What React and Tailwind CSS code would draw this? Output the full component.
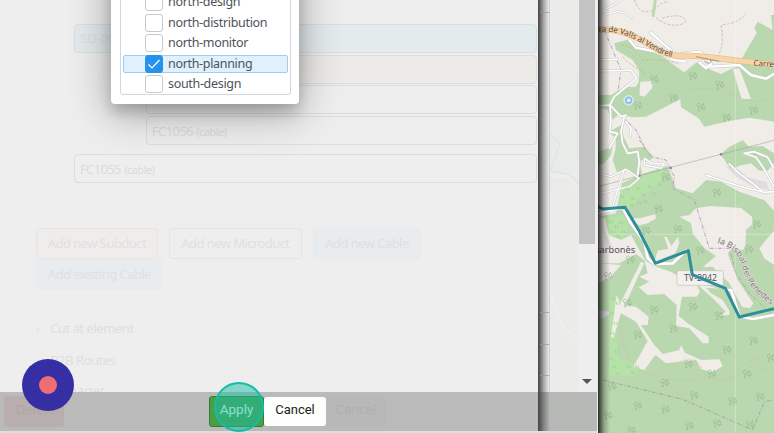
import React from 'react';

const groups = ['north-design', 'north-distribution', 'north-monitor', 'north-planning', 'south-design'];

const trees = [
  [174, 238], [290, 228], [371, 255], [232, 293], [125, 317], [314, 321], [472, 331], [391, 353],
  [208, 532], [187, 627], [362, 578], [245, 687], [150, 692], [482, 673], [312, 751], [458, 748], [102, 779], [36, 828],
  [93, 909], [174, 929], [290, 920], [369, 947], [232, 986], [125, 1005], [472, 1022], [392, 1049], [525, 1074],
  [277, 1092], [347, 1121], [453, 1122], [206, 1148], [294, 1186], [48, 1160], [409, 1203], [492, 1190], [125, 1217],
  [208, 1228], [36, 1246], [363, 1270], [279, 1277], [462, 1273], [106, 1291],
];

const marsh = [
  [75, 585], [90, 562], [108, 590], [122, 560], [140, 580], [158, 555], [172, 576], [190, 548], [82, 620], [104, 610], [126, 604], [146, 600],
  [42, 660], [58, 675], [72, 662], [46, 690], [64, 704], [80, 690],
  [48, 890], [62, 905], [44, 935], [55, 965], [45, 995], [58, 1050], [42, 1070], [52, 1095], [64, 1115], [95, 1095], [108, 1112], [120, 1095],
];

function Road({ d, w = 7 }) {
  return (
    <g fill="none" strokeLinecap="round" strokeLinejoin="round">
      <path d={d} stroke="#cbc8ca" strokeWidth={w + 3} />
      <path d={d} stroke="#fff" strokeWidth={w} />
    </g>
  );
}

function TerrainMap() {
  return (
    <svg className="block h-[433px] w-[176px]" viewBox="6 0 528 1299" fontFamily="'Noto Sans', sans-serif">
      <rect x="6" width="528" height="1299" fill="#f0ece8" />
      <g fill="#bad8af">
        <path d="M55 130 100 118 130 145 175 150 220 185 265 217 302 187 345 210 375 222 425 197 452 150 482 100 475 82 485 65 530 90 525 45H534V365L460 353 400 363 325 380 308 355 255 322 253 298 150 350 110 352 70 343 45 362 35 330 6 322V285L45 285 85 262 120 260 128 245 130 212 110 180 60 150Z" />
        <path d="M374 463 400 440 440 421 458 440 500 438 534 460V490L515 512 490 512 465 490 430 497 405 510 392 490Z" />
        <path d="M38 395 75 375 83 410 100 445 145 440 172 470 160 485 130 480 138 520 125 530 95 512 62 515 50 480 58 450 60 415Z" />
        <path d="M6 455 50 440 45 465 25 490 6 495Z" />
        <path d="M78 550 130 525 215 498 240 565 290 580 330 540 375 545 430 575 505 600 534 632V1299H6V650L60 640Z" />
      </g>
      <path fill="#b6e2a9" d="M75 565 130 535 205 505 190 550 130 590 85 640 70 620ZM28 650 85 645 97 690 75 720 35 700ZM45 880 75 900 60 1010 70 1080 130 1090 120 1130 60 1125 38 1130Z" />
      <g fill="#f0ece8">
        <path d="M133 245 170 243 168 265 145 290 130 286ZM410 207 430 205 465 297 437 297Z" />
        <path d="M250 650 280 645 300 625 345 618 435 624 468 650 470 672 450 690 448 740 440 750 410 745 395 760 425 840 472 910 462 925 438 920 400 850 350 800 320 802 360 768 325 745 290 700 285 670Z" />
        <path d="M534 692 510 720 490 745 505 775 534 795Z" />
        <path d="M95 655 130 655 178 643 180 655 155 670 130 676ZM204 710 213 712 226 738 246 710 250 730 238 760 175 785 185 752 217 746Z" />
        <path d="M6 650 28 655 38 705 75 720 105 705 150 785 120 762 70 790 6 790ZM6 790 75 795 40 835 6 850ZM145 780 180 800 225 815 250 830 370 866 330 863 345 880 380 900 400 932 400 945 370 948 390 935 345 890 300 850 312 875 302 890 258 890 248 947 275 970 338 1010 338 1030 320 1030 280 985 240 978 242 915 205 882 155 885 128 862 160 845 130 830 155 820ZM135 785 145 790 80 930 68 920Z" />
        <path d="M75 915 120 920 158 950 155 975 135 975 175 1035 200 1062 250 1050 255 1035 267 1058 315 1080 370 1078 380 1098 350 1117 315 1108 300 1080 210 1090 178 1065 145 1110 112 1100 155 1023 120 965 75 940 52 1015 45 1010 62 885Z" />
      </g>
      <path fill="#e0dde0" d="M6 930 40 935 38 945 18 955 6 950ZM390 500 430 508 450 530 510 545 520 570 470 560 420 530ZM16 675 35 710 60 760 35 750Z" />
      <g fill="none" stroke="#ccb195" strokeWidth="2.5" strokeDasharray="8 5">
        <path d="M115 0Q130 40 155 35T185 20 215 5M170 45Q210 80 245 75T265 55 195 55M370 160Q385 130 375 75 430 70 450 40M75 135Q110 135 140 180 190 175 245 190M80 170Q105 200 150 220" />
      </g>
      <g fill="none" stroke="#d8b493" strokeWidth="2" strokeDasharray="4 4">
        <path d="M150 315Q250 265 310 265T430 292 534 285M75 950Q70 1050 120 1100T230 1100 320 1110 440 1115 470 1080 534 1110M210 1135Q290 1145 360 1130M265 1205Q230 1150 190 1150M270 1210 320 1299" />
      </g>
      <g fill="none" stroke="#b79fbb" strokeWidth="3" strokeDasharray="12 5 3 5">
        <path d="M25 90 75 210 65 280 40 320M80 350 120 390 150 450M130 420 165 470 210 480 235 530 230 565 295 600 340 745 400 745 420 820 460 880 534 950" />
        <path d="M20 1140 260 1198 470 1290 505 1205 534 1200" stroke="#a7a0ab" />
      </g>
      <path d="M6 560 130 527 220 503 375 463 534 421" fill="none" stroke="#9c9794" strokeWidth="1.5" />
      <g fill="#888"><circle cx="130" cy="527" r="4" /><circle cx="224" cy="504" r="4" /><circle cx="375" cy="463" r="4" /></g>
      <Road d="M6 40 50 15 75 0M25 45 65 35 90 40 110 55" w={4} />
      <Road d="M165 98 200 130 235 158M100 120 120 143 180 155 235 180 270 185M240 172 265 160 310 155 330 170 345 192 330 204 310 188M342 200 430 195 465 225 510 236 534 222" />
      <Road d="M6 180 65 178M6 213 75 212 105 210 122 235 85 265 55 290 42 315 6 318M42 315 45 365 40 395 65 400 40 445M42 315 75 350 90 345M85 350 75 395 80 430 95 460 125 455 130 485 125 525M90 365 105 385 103 410" w={5} />
      <Road d="M6 520 45 530 90 508 130 535 100 560 6 582M85 508 65 570 50 620M145 475 170 490 205 492 195 505 145 495 145 475" w={4} />
      <Road d="M400 492 430 520 470 550 500 575M330 526 345 530 435 560 505 577 534 575M445 460 475 455 515 472 534 505M445 460 480 472 500 500 534 560" w={5} />
      <Road d="M6 640 80 623 105 670 145 725 155 775 175 792 230 790 270 752M390 870 405 870 430 948 470 957 534 945" w={8} />
      <path d="M178 0 171 50" fill="none" stroke="#b9dbaf" strokeWidth="9" />
      <g fill="none">
        <path d="M6 89C70 83 120 110 160 134S220 168 245 167C320 163 370 180 534 193" stroke="#ddb788" strokeWidth="18" />
        <path d="M6 89C70 83 120 110 160 134S220 168 245 167C320 163 370 180 534 193" stroke="#f8d4a6" strokeWidth="15" />
        <path d="M300 170 370 184M325 184Q345 198 345 180" stroke="#7f7771" strokeWidth="2" />
      </g>
      <path d="M418 0V1299M6 703H534" fill="none" stroke="#fff" strokeWidth="2" opacity=".45" />
      {marsh.map(([x, y]) => <path key={`${x}-${y}`} d={`M${x} ${y}v10M${x + 7} ${y + 2}v8`} stroke="#93ca8b" strokeWidth="2" />)}
      {trees.map(([x, y]) => (
        <g key={`${x}-${y}`} transform={`translate(${x} ${y})`} fill="none" stroke="#97b68e" strokeWidth="2">
          <path d="M-6 11V-3M-6 0a5.5 5.500 0 1 1 1 0M-9 11h7M7 11V4M7-11 1 4h12Z" />
        </g>
      ))}
      <circle cx="98" cy="301" r="14" fill="#a9d4ec" stroke="#fff" strokeWidth="2" />
      <circle cx="98" cy="301" r="8" fill="#d9efff" stroke="#6aa9db" strokeWidth="3" />
      <defs>
        <path id="main-road-name" d="M8 96C70 90 120 118 160 142S215 170 260 178" />
        <path id="valley-name" d="M364 729C420 745 428 770 438 800S450 860 534 920" />
      </defs>
      <g fill="#574337" stroke="#fbdcb6" strokeWidth="2" paintOrder="stroke" fontSize="24">
        <text><textPath href="#main-road-name" textLength="236" lengthAdjust="spacingAndGlyphs">ra de Valls al Vendrell</textPath></text>
        <text x="472" y="197" transform="rotate(4 472 197)">Carre</text>
      </g>
      <text x="-3" y="760" fontSize="26" fill="#5a565a" stroke="#eee9e7" strokeWidth="3" paintOrder="stroke" textLength="121" lengthAdjust="spacingAndGlyphs">sarbonès</text>
      <rect x="243" y="812" width="139" height="44" rx="3" fill="#f2f1ef" stroke="#c1c1bf" strokeWidth="2" />
      <text x="264" y="844" fontSize="25" fill="#555" textLength="99" lengthAdjust="spacingAndGlyphs">TV-2942</text>
      <path d="M6 620 20 627 87 622 130 694 178 790 277 752 289 824 388 865 430 951 534 926" fill="none" stroke="#2f8f98" strokeWidth="9" strokeLinejoin="round" />
      <text fill="#867788" stroke="#e8e6de" strokeWidth="3" paintOrder="stroke" fontSize="25">
        <textPath href="#valley-name" textLength="255" lengthAdjust="spacingAndGlyphs">la Bisbal del Penedes</textPath>
      </text>
    </svg>
  );
}

function Divider() {
  return <div className="-mr-0.5 h-px shrink-0 bg-[#ebebeb]" />;
}

function CableForm() {
  return (
    <div className="relative flex h-[392px] flex-col overflow-hidden bg-[#eeeeee] pt-6 pr-px pl-[36px] text-[13px] text-[#dedede]">
      <div className="ml-[38px] h-[29px] shrink-0 rounded border border-[#d9dfe0] bg-[#e4ebed] pl-[5px] leading-[27px] text-[#d9e0e2]">SD-001</div>
      <div className="mt-[2px] ml-[110px] h-[29px] shrink-0 rounded border border-[#dfdedb] bg-[#edebe7]" />
      <div className="mt-[1px] ml-[110px] h-[29px] shrink-0 rounded border border-[#dddddd]" />
      <div className="mt-[2px] ml-[110px] h-[29px] shrink-0 rounded border border-[#dcdcdc] pl-[5px] leading-[28px] text-[#dbdbdb]">
        <span className="tracking-[-0.65px]">FC1056</span> <span className="text-[11px] tracking-[-0.5px]">(cable)</span>
      </div>
      <div className="mt-[9px] ml-[38px] h-[29px] shrink-0 rounded border border-[#dcdcdc] pl-[5px] leading-[28px] text-[#dbdbdb]">
        <span className="tracking-[-0.65px]">FC1055</span> <span className="text-[11px] tracking-[-0.5px]">(cable)</span>
      </div>
      <div className="mt-[45px] flex shrink-0 gap-[11px] whitespace-nowrap leading-[28px] tracking-[-0.55px] text-[#e0e0e0]">
        <div className="h-[31px] w-[122px] rounded-sm border border-[#e9e4e0] bg-[#efedec] text-center">Add new Subduct</div>
        <div className="h-[31px] w-[133px] rounded-sm border border-[#e2e5e4] text-center">Add new Microduct</div>
        <div className="h-[31px] w-[108px] rounded-sm border border-[#e7ebef] bg-[#e8ecef] text-center">Add new Cable</div>
      </div>
      <div className="h-[31px] w-[127px] shrink-0 rounded-sm bg-[#e8ecef] text-center leading-[30px] tracking-[-0.55px] text-[#dfe1e3]">Add existing Cable</div>
      <div className="h-[22px] shrink-0" />
      <Divider />
      <div className="flex h-[31px] shrink-0 items-center tracking-[-0.45px]"><span className="w-[14px]">›</span>Cut at element</div>
      <Divider />
      <div className="flex h-[31px] shrink-0 items-center tracking-[-0.45px]"><span className="w-[14px]">›</span>B2B Routes</div>
      <Divider />
      <div className="flex h-[28px] shrink-0 items-center"><span className="w-[14px]">›</span>Manager</div>
    </div>
  );
}

function GroupPicker() {
  return (
    <div className="absolute top-[-100px] left-[111px] flex h-[204px] w-[188px] flex-col justify-end rounded-sm bg-white px-[9px] pb-[9px] shadow-[0_8px_42px_2px_rgba(0,0,0,0.3),0_8px_14px_rgba(0,0,0,0.18)]">
      <div className="flex h-[150px] w-[171px] flex-col justify-end gap-[2.5px] rounded-[3px] border border-[#d4d7d9] px-[2px] pb-px">
        {groups.map((name) => {
          const selected = name === 'north-planning';
          return (
            <div key={name} className={`flex h-[18px] shrink-0 items-center rounded-[2px] border pl-[21px] ${selected ? 'border-[#9acff6] bg-[#e2f0fc]' : 'border-transparent'}`}>
              <span className={`flex size-[18px] items-center justify-center rounded-[3px] border ${selected ? 'border-[#2593ed] bg-[#2593ed]' : 'border-[#c6c9cc] bg-white'}`}>
                {selected && <svg className="size-3" viewBox="0 0 12 12"><path d="M.5 6.5 4 10l7.500-8" fill="none" stroke="white" strokeWidth="1.2" /></svg>}
              </span>
              <span className="ml-[5px] text-[12.5px] leading-4 tracking-[-0.32px] text-[#4d5359]">{name}</span>
            </div>
          );
        })}
      </div>
    </div>
  );
}

export default function App() {
  return (
    <div className="relative flex h-[433px] w-[774px] overflow-hidden bg-[#eee] font-['Noto_Sans',sans-serif]">
      <main className="relative w-[538px] shrink-0 overflow-hidden">
        <CableForm />
        <GroupPicker />
        <footer className="relative flex h-[41px] items-start border-b-2 border-[#dedede] bg-[#bababa] pt-1 pl-1 text-[13px] leading-[27px]">
          <div className="h-[31px] w-[60px] rounded bg-[#b8aeae] pl-3 text-[#aca6a6]">Delete</div>
          <button className="ml-[145px] h-[31px] w-[55px] rounded-[3px] border border-[#347e34] bg-[#4a9f45] pb-1 font-['Roboto',sans-serif] text-[13.5px] leading-[25px] text-white">Apply</button>
          <button className="mt-px h-[29px] w-[62px] rounded-[3px] bg-[#fcfffb] pb-1 font-['Roboto',sans-serif] text-[13px] leading-[25px] text-[#222]">Cancel</button>
          <div className="h-[30px] w-[60px] rounded bg-[#b8b8b8] text-center text-[#afafaf]">Cancel</div>
        </footer>
        <div className="absolute top-[382px] left-[214px] size-[50px] rounded-full border-2 border-[#19bba6] bg-[#19bba6]/50" />
        <div className="absolute top-[359px] left-[22px] flex size-[52px] items-center justify-center rounded-full bg-[#352fa3]">
          <div className="size-[18px] rounded-full bg-[#ef6d76]" />
        </div>
      </main>
      <aside className="flex w-[60px] shrink-0 flex-col border-r border-[#eeeeee] bg-[#ebecea]">
        <div className="flex h-[392px]">
          <div className="flex w-3 flex-col border-r border-[#cfcfcf] bg-gradient-to-r from-[#444] via-[#a4a4a4] to-[#ececec] pl-[2px]">
            <div className="mt-3 h-px bg-[#999]/70" />
            <div className="mt-[299px] h-px bg-[#999]/70" />
            <div className="mt-[31px] h-px bg-[#999]/70" />
            <div className="mt-[30px] h-px bg-[#999]/70" />
          </div>
          <svg className="block h-[392px] w-[29px]" viewBox="0 0 29 392">
            <path d="M0 73 17 67 29 72V160L17 185 0 190Z" fill="#e9ebe8" />
            <path d="M-10 126 10 143 0 171 18 174 29 183" fill="none" stroke="#e0e6e8" strokeWidth="2" />
            <path d="M0 175 19 177 29 190M0 295 12 325 29 341" fill="none" stroke="#eeeeec" strokeWidth="3" />
          </svg>
          <div className="flex w-[18px] flex-col items-start justify-between bg-[#eeeeee] pb-2">
            <div className="h-[244px] w-4 bg-[#c2c3c2]" />
            <div className="ml-[3px] h-0 w-0 border-x-[5px] border-t-[5px] border-x-transparent border-t-[#555]" />
          </div>
        </div>
        <div className="flex h-[41px] border-b-2 border-[#dedede] bg-[#b7b9b6]">
          <div className="w-3 bg-gradient-to-r from-[#444] via-[#858585] to-[#b7b9b6]" />
        </div>
      </aside>
      <section className="relative w-[176px] shrink-0 overflow-hidden">
        <TerrainMap />
        <div className="absolute inset-y-0 left-0 w-3 bg-gradient-to-r from-black/80 via-black/25 to-transparent" />
      </section>
    </div>
  );
}
